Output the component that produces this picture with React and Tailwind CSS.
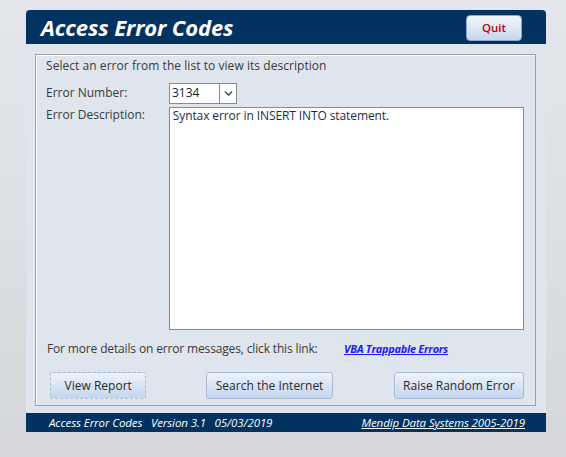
export default function App() {
  const font = { fontFamily: '"Open Sans", "Noto Sans", sans-serif' };
  const btn =
    "h-[27px] rounded-[3px] border border-[#a9bcd6] bg-gradient-to-b from-[#eef3fb] to-[#c3d5ef] text-[12px] text-[#2b2b2b] flex items-center justify-center";
  return (
    <div
      className="w-[566px] h-[457px] bg-gradient-to-b from-[#e3e7ec] to-[#d5d7da] pt-[10px] pl-[26px] pr-[20px]"
      style={font}
    >
      <div className="h-[34px] bg-[#02325f] rounded-t-[4px] flex items-center justify-between pl-[15px] pr-[24px]">
        <span className="text-white text-[22px] font-bold italic leading-none tracking-[-0.1px]">
          Access Error Codes
        </span>
        <div className="w-[56px] h-[26px] mt-[2px] rounded-[4px] border border-[#8fa8cc] bg-gradient-to-b from-[#f3f6fc] to-[#c6d7ef] flex items-center justify-center text-[11.5px] font-semibold text-[#c00000]">
          Quit
        </div>
      </div>
      <div className="bg-[#dfe5ed] pt-[10px] pb-[7px] pl-[9px] pr-[10px]">
        <div className="h-[352px] border border-[#a0a0a0] shadow-[inset_1px_1px_0_#ffffff] pl-[10px] pr-[11px] pt-[3px] text-[#3a3a3a] text-[12px]">
          <div className="leading-[16px] h-[16px] tracking-[0.05px]">
            Select an error from the list to view its description
          </div>
          <div className="flex items-center mt-[9px] h-[20px]">
            <div className="w-[123px]">Error Number:</div>
            <div className="flex h-[21px]">
              <div className="w-[51px] h-full bg-white border border-[#8a8a8a] text-[#1d1d1d] pl-[2px] leading-[17px]">
                3134
              </div>
              <div className="w-[17px] h-full bg-white border border-l-0 border-[#8a8a8a] flex items-center justify-center">
                <svg width="9" height="7" viewBox="0 0 9 7">
                  <path d="M1 1.5 L4.5 5 L8 1.5" stroke="#555" strokeWidth="1.6" fill="none" />
                </svg>
              </div>
            </div>
          </div>
          <div className="flex mt-[4px]">
            <div className="w-[123px] leading-[16px]">Error Description:</div>
            <div className="w-[356px] h-[223px] bg-white border border-[#8a8a8a] pl-[3px] leading-[15px] text-[#1f2d4a] tracking-[-0.1px]">
              Syntax error in INSERT INTO statement.
            </div>
          </div>
          <div className="flex items-center mt-[11px] h-[16px] pl-[1px]">
            <span className="w-[297px] tracking-[-0.15px]">
              For more details on error messages, click this link:
            </span>
            <span className="text-[#1a1aff] font-bold italic underline text-[11px] tracking-[-0.3px]">
              VBA Trappable Errors
            </span>
          </div>
          <div className="flex mt-[15px] pl-[4px]">
            <div className={`${btn} w-[97px] border-dashed border-[#5a6a80]`}>View Report</div>
            <div className={`${btn} w-[127px] ml-[60px]`}>Search the Internet</div>
            <div className={`${btn} w-[131px] ml-[61px]`}>Raise Random Error</div>
          </div>
        </div>
      </div>
      <div className="h-[19px] bg-[#02325f] flex items-center justify-between pl-[23px] pr-[21px] text-white italic text-[11.5px] tracking-[-0.1px]">
        <span className="whitespace-pre">Access Error Codes   Version 3.1   05/03/2019</span>
        <span className="underline">Mendip Data Systems 2005-2019</span>
      </div>
    </div>
  );
}
